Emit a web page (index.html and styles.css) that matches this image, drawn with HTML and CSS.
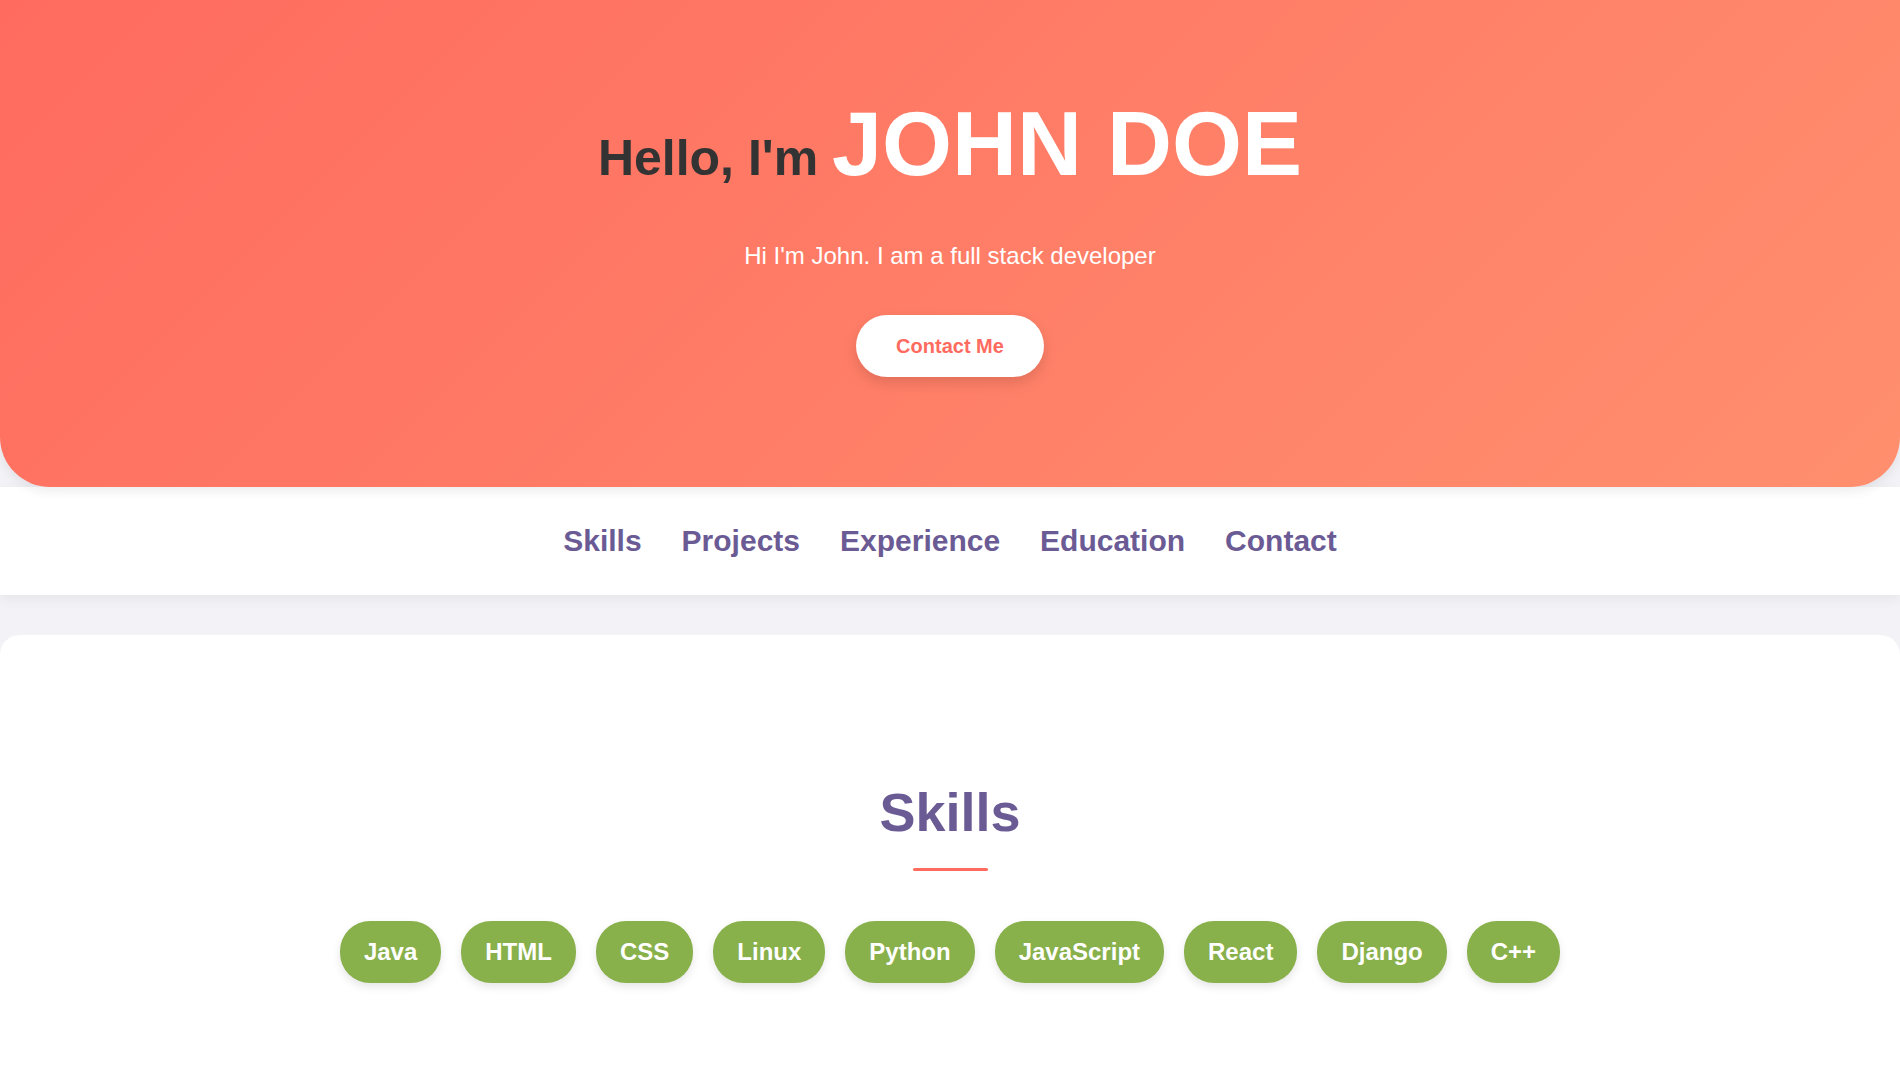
FILE: index.html
```html
<!DOCTYPE html>
<html lang="en">
<head>
<meta charset="UTF-8">
<title>John Doe</title>
<link rel="stylesheet" href="styles.css">
</head>
<body>
<header class="hero">
  <h1 class="hero-title">Hello, I'm <span class="hero-name">JOHN DOE</span></h1>
  <p class="hero-sub">Hi I'm John. I am a full stack developer</p>
  <a class="hero-btn" href="#contact">Contact Me</a>
</header>
<nav class="nav">
  <a href="#skills">Skills</a>
  <a href="#projects">Projects</a>
  <a href="#experience">Experience</a>
  <a href="#education">Education</a>
  <a href="#contact">Contact</a>
</nav>
<main class="main">
  <section class="card" id="skills">
    <h2 class="section-title">Skills</h2>
    <div class="underline"></div>
    <ul class="skills">
      <li>Java</li>
      <li>HTML</li>
      <li>CSS</li>
      <li>Linux</li>
      <li>Python</li>
      <li>JavaScript</li>
      <li>React</li>
      <li>Django</li>
      <li>C++</li>
    </ul>
  </section>
</main>
</body>
</html>
```
FILE: styles.css
```css
* { box-sizing: border-box; }
html, body { margin: 0; padding: 0; }
body {
  background: #f3f3f7;
  font-family: "Liberation Sans", Arial, sans-serif;
  overflow: hidden;
}
.hero {
  background: linear-gradient(135deg, #ff6b5f 0%, #ff8f6e 100%);
  border-radius: 0 0 50px 50px;
  box-shadow: 0 4px 12px rgba(0,0,0,0.08);
  text-align: center;
  padding: 93px 20px 110px;
  height: 487px;
  position: relative;
  z-index: 2;
}
.hero-title {
  margin: 0;
  font-size: 50px;
  font-weight: 700;
  color: #333;
  line-height: 103px;
}
.hero-name {
  font-size: 90px;
  color: #fff;
}
.hero-sub {
  margin: 32px 0 45px;
  font-size: 24px;
  line-height: 28px;
  color: #fff;
}
.hero-btn {
  display: inline-block;
  background: #fff;
  color: #ff6b5f;
  font-weight: 700;
  font-size: 20px;
  line-height: 22px;
  padding: 20px 40px;
  border-radius: 40px;
  text-decoration: none;
  box-shadow: 0 6px 14px rgba(0,0,0,0.12);
}
.nav {
  background: #fff;
  height: 108px;
  display: flex;
  justify-content: center;
  align-items: center;
  gap: 40px;
  box-shadow: 0 4px 12px rgba(0,0,0,0.06);
  position: relative;
  z-index: 1;
}
.nav a {
  color: #6b5b95;
  font-weight: 700;
  font-size: 30px;
  text-decoration: none;
}
.main {
  padding-top: 40px;
}
.card {
  background: #fff;
  border-radius: 20px;
  padding: 146px 20px 80px;
  min-height: 500px;
  text-align: center;
}
.section-title {
  margin: 0;
  font-size: 54px;
  line-height: 62px;
  color: #6b5b95;
  font-weight: 700;
}
.underline {
  width: 75px;
  height: 3px;
  background: #ff6b5f;
  margin: 25px auto 50px;
  border-radius: 2px;
}
.skills {
  list-style: none;
  margin: 0;
  padding: 0;
  display: flex;
  justify-content: center;
  gap: 20px;
}
.skills li {
  background: #88b04b;
  color: #fff;
  font-weight: 700;
  font-size: 24px;
  line-height: 28px;
  padding: 17px 24px;
  border-radius: 30px;
  box-shadow: 0 4px 8px rgba(0,0,0,0.1);
}
```
